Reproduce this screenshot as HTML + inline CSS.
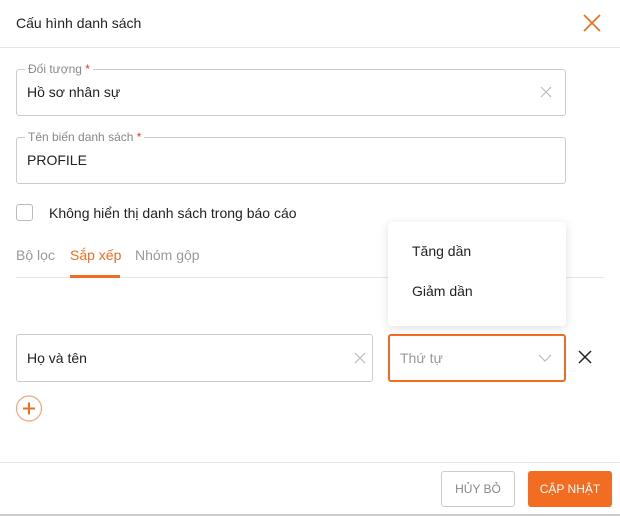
<!DOCTYPE html>
<html><head><meta charset="utf-8"><style>
*{box-sizing:border-box;margin:0;padding:0}
body{width:620px;height:516px;background:#fff;font-family:"Liberation Sans",sans-serif;color:#222;position:relative;overflow:hidden;font-size:14px}
.a{position:absolute}
.box{position:absolute;border:1px solid #ccc;border-radius:3px}
.lbl{position:absolute;top:-8px;left:8px;background:#fff;padding:0 3px;font-size:12px;color:#888;line-height:14px}
.lbl b{color:#e33;font-weight:normal}
.val{position:absolute;left:10px;font-size:14px}
</style></head><body>
<div class="a" style="left:16px;top:15px;font-size:14px">Cấu hình danh sách</div>
<svg class="a" style="left:583px;top:14px" width="18" height="18"><path d="M1 1L17 17M17 1L1 17" stroke="#f26c21" stroke-width="1.6"/></svg>
<div class="a" style="left:0;top:47px;width:620px;height:1px;background:#e6e6e6"></div>

<div class="box" style="left:16px;top:69px;width:550px;height:47px"><div class="lbl">Đối tượng <b>*</b></div><div class="val" style="top:14px">Hồ sơ nhân sự</div>
<svg class="a" style="left:523px;top:16px" width="12" height="12"><path d="M1 1L11 11M11 1L1 11" stroke="#bbb" stroke-width="1.2"/></svg></div>
<div class="box" style="left:16px;top:137px;width:550px;height:47px"><div class="lbl">Tên biến danh sách <b>*</b></div><div class="val" style="top:14px">PROFILE</div></div>

<div class="a" style="left:16px;top:204px;width:17px;height:17px;border:1px solid #bbb;border-radius:3px"></div>
<div class="a" style="left:49px;top:205px">Không hiển thị danh sách trong báo cáo</div>

<div class="a" style="left:16px;top:247px;color:#999">Bộ lọc</div>
<div class="a" style="left:70px;top:247px;color:#f26c21">Sắp xếp</div>
<div class="a" style="left:135px;top:247px;color:#999">Nhóm gộp</div>
<div class="a" style="left:16px;top:277px;width:588px;height:1px;background:#e6e6e6"></div>
<div class="a" style="left:70px;top:275px;width:50px;height:3px;background:#f26c21"></div>

<div class="box" style="left:16px;top:334px;width:357px;height:48px"><div class="val" style="top:15px">Họ và tên</div>
<svg class="a" style="left:337px;top:17px" width="12" height="12"><path d="M1 1L11 11M11 1L1 11" stroke="#bbb" stroke-width="1.2"/></svg></div>
<div class="box" style="left:388px;top:334px;width:178px;height:48px;border:2px solid #f26c21"><div class="val" style="top:14px;color:#999">Thứ tự</div>
<svg class="a" style="left:148px;top:18px" width="14" height="9"><path d="M1 1L7 7L13 1" stroke="#bbb" stroke-width="1.2" fill="none"/></svg></div>
<svg class="a" style="left:578px;top:350px" width="14" height="14"><path d="M1 1L13 13M13 1L1 13" stroke="#222" stroke-width="1.5"/></svg>
<svg class="a" style="left:15px;top:395px" width="30" height="30"><circle cx="14" cy="13.5" r="12.5" stroke="#f6a57a" stroke-width="1.2" fill="none"/><path d="M8 13.5H20M14 7.5V19.5" stroke="#f26c21" stroke-width="2"/></svg>

<div class="a" style="left:388px;top:222px;width:178px;height:104px;background:#fff;border-radius:4px;box-shadow:0 2px 10px rgba(0,0,0,.13)">
<div class="a" style="left:24px;top:21px">Tăng dần</div><div class="a" style="left:24px;top:61px">Giảm dần</div></div>

<div class="a" style="left:0;top:462px;width:620px;height:1px;background:#e6e6e6"></div>
<div class="a" style="left:441px;top:471px;width:74px;height:36px;border:1px solid #ccc;border-radius:3px;font-size:12px;color:#888;text-align:center;line-height:34px">HỦY BỎ</div>
<div class="a" style="left:528px;top:471px;width:84px;height:36px;background:#f26c21;border-radius:3px;font-size:12px;color:#fff;text-align:center;line-height:36px">CẬP NHẬT</div>
<div class="a" style="left:0;top:514px;width:620px;height:2px;background:#ccc"></div>
</body></html>
